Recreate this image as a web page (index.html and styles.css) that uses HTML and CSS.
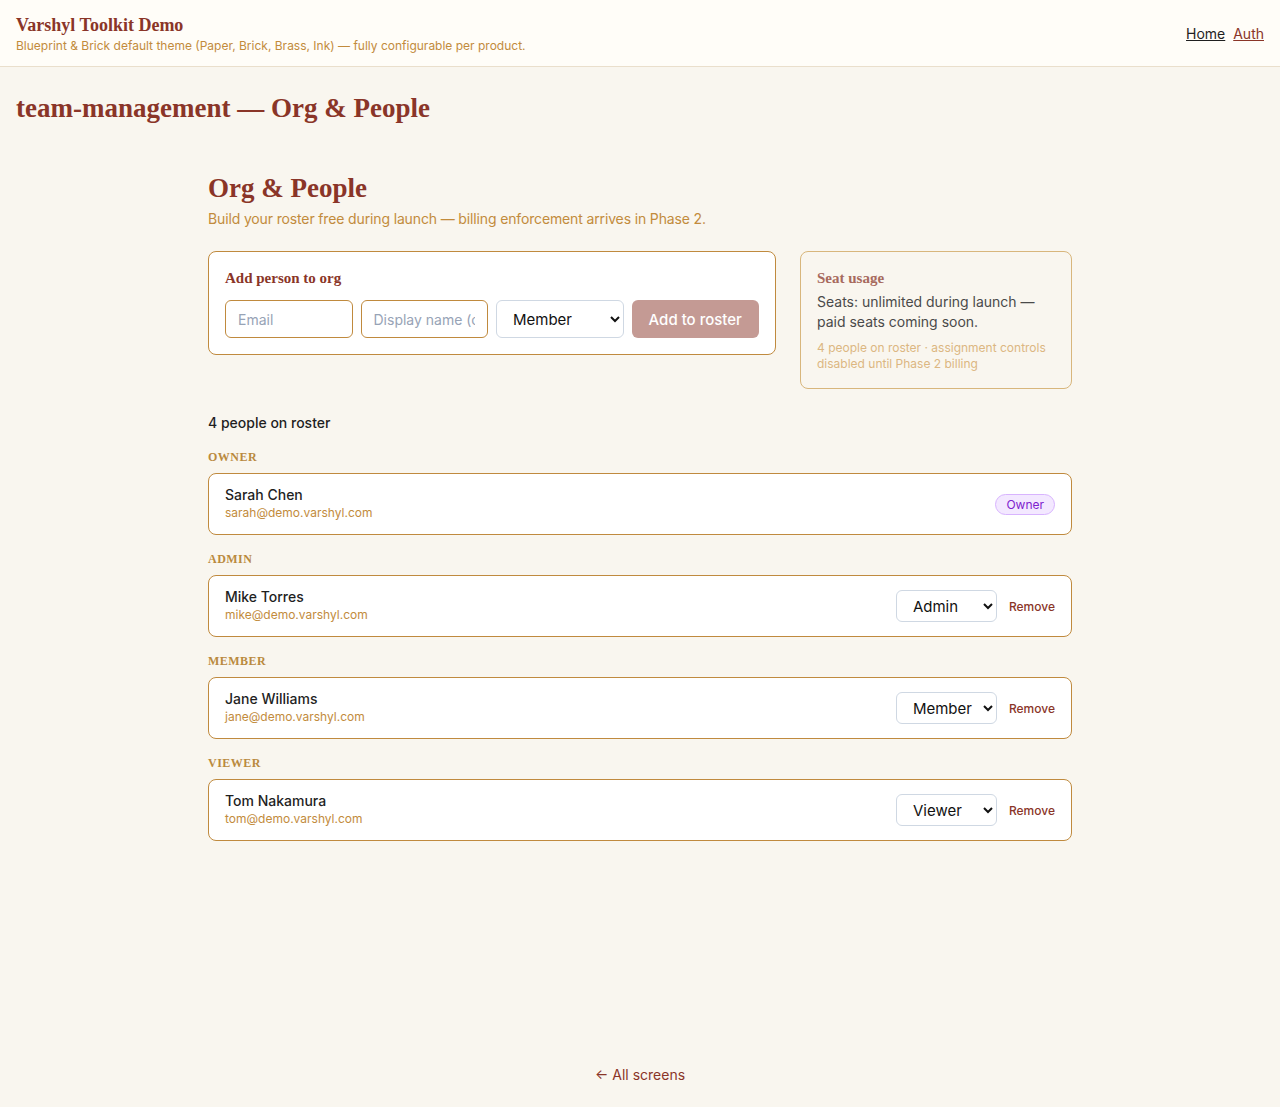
FILE: index.html
```html
<!DOCTYPE html>
<html lang="en">
<head>
  <meta charset="UTF-8" />
  <meta name="viewport" content="width=device-width, initial-scale=1.0"/>
  <title>team-management — Org &amp; People</title>
  <link rel="stylesheet" href="styles.css">
</head>
<body>
  <header class="top-bar">
    <div class="brand">
      <div class="brand-name">Varshyl Toolkit Demo</div>
      <div class="brand-tagline">Blueprint &amp; Brick default theme (Paper, Brick, Brass, Ink) — fully configurable per product.</div>
    </div>
    <nav class="nav-links">
      <a href="#" class="nav-home">Home</a>
      <a href="#" class="nav-auth">Auth</a>
    </nav>
  </header>

  <h1 class="screen-title">team-management — Org &amp; People</h1>

  <main class="screen">
    <h2 class="page-title">Org &amp; People</h2>
    <p class="page-lead">Build your roster free during launch — billing enforcement arrives in Phase 2.</p>

    <div class="top-grid">
      <section class="card add-card">
        <h3 class="card-title">Add person to org</h3>
        <div class="add-row">
          <input class="field" type="email" placeholder="Email">
          <input class="field" type="text" placeholder="Display name (optional)">
          <select class="select">
            <option>Member</option>
            <option>Admin</option>
            <option>Viewer</option>
          </select>
          <button class="add-button" disabled>Add to roster</button>
        </div>
      </section>

      <aside class="seat-card">
        <h3 class="card-title">Seat usage</h3>
        <p class="seat-text">Seats: unlimited during launch — paid seats coming soon.</p>
        <p class="seat-note">4 people on roster · assignment controls disabled until Phase 2 billing</p>
      </aside>
    </div>

    <p class="roster-count">4 people on roster</p>

    <div class="group">
      <div class="group-label">Owner</div>
      <div class="person">
        <div class="person-info">
          <div class="person-name">Sarah Chen</div>
          <div class="person-email">sarah@demo.varshyl.com</div>
        </div>
        <span class="owner-badge">Owner</span>
      </div>
    </div>

    <div class="group">
      <div class="group-label">Admin</div>
      <div class="person">
        <div class="person-info">
          <div class="person-name">Mike Torres</div>
          <div class="person-email">mike@demo.varshyl.com</div>
        </div>
        <div class="person-actions">
          <select class="select role-select">
            <option selected>Admin</option>
            <option>Member</option>
            <option>Viewer</option>
          </select>
          <button class="remove">Remove</button>
        </div>
      </div>
    </div>

    <div class="group">
      <div class="group-label">Member</div>
      <div class="person">
        <div class="person-info">
          <div class="person-name">Jane Williams</div>
          <div class="person-email">jane@demo.varshyl.com</div>
        </div>
        <div class="person-actions">
          <select class="select role-select">
            <option>Admin</option>
            <option selected>Member</option>
            <option>Viewer</option>
          </select>
          <button class="remove">Remove</button>
        </div>
      </div>
    </div>

    <div class="group">
      <div class="group-label">Viewer</div>
      <div class="person">
        <div class="person-info">
          <div class="person-name">Tom Nakamura</div>
          <div class="person-email">tom@demo.varshyl.com</div>
        </div>
        <div class="person-actions">
          <select class="select role-select">
            <option>Admin</option>
            <option>Member</option>
            <option selected>Viewer</option>
          </select>
          <button class="remove">Remove</button>
        </div>
      </div>
    </div>
  </main>

  <footer class="footer">
    <a href="#">← All screens</a>
  </footer>
</body>
</html>
```

FILE: styles.css
```css
body {
  font-family: Inter, 'Noto Sans', sans-serif;
  background-color: #f9f6ef;
  color: #1f1f1f;
  margin: 0;
  min-height: 1107px;
  display: flex;
  flex-direction: column;
}

.top-bar {
  display: flex;
  justify-content: space-between;
  align-items: center;
  background-color: #fffdf8;
  border-bottom: 1px solid #eadfcc;
  padding: 13px 16px 13px 16px;
  height: 40px;
}

.brand-name {
  font-family: 'Liberation Serif', serif;
  font-weight: bold;
  font-size: 18px;
  color: #8a3528;
  line-height: 22px;
}

.brand-tagline {
  font-size: 12px;
  color: #c28b3c;
  margin-top: 2px;
}

.nav-links {
  font-size: 14px;
}

.nav-links a {
  margin-left: 4px;
}

.nav-home {
  color: #1f1f1f;
}

.nav-auth {
  color: #8a3528;
}

.screen-title {
  font-family: 'Liberation Serif', serif;
  font-size: 27px;
  color: #8a3528;
  margin: 24px 16px 0;
  line-height: 34px;
}

.screen {
  width: 864px;
  margin: 0 auto;
  padding-top: 46px;
  flex: 1;
}

.page-title {
  font-family: 'Liberation Serif', serif;
  font-size: 27px;
  color: #8a3528;
  margin: 0;
  line-height: 34px;
}

.page-lead {
  font-size: 14px;
  letter-spacing: -0.01em;
  color: #c28b3c;
  margin: 5px 0 24px;
}

.top-grid {
  display: grid;
  grid-template-columns: 1fr 272px;
  gap: 24px;
  align-items: start;
}

.card {
  background-color: #fff;
  border: 1px solid #c08a3e;
  border-radius: 8px;
  padding: 16px;
}

.card-title {
  font-family: 'Liberation Serif', serif;
  font-size: 15px;
  color: #8a3528;
  margin: 0 0 12px;
  line-height: 20px;
}

.add-row {
  display: grid;
  grid-template-columns: repeat(4, 1fr);
  gap: 8px;
}

.field {
  font-family: inherit;
  font-size: 14px;
  height: 38px;
  box-sizing: border-box;
  border: 1px solid #c08a3e;
  border-radius: 6px;
  padding: 0 12px;
  min-width: 0;
  color: #1f1f1f;
}

.field::placeholder {
  color: #97a3b6;
}

.select {
  font-family: inherit;
  font-size: 15px;
  height: 38px;
  box-sizing: border-box;
  border: 1px solid #cfd8e3;
  border-radius: 6px;
  padding: 0 4px 0 12px;
  background-color: #fff;
  color: #111;
  min-width: 0;
}

.add-button {
  font-family: inherit;
  font-size: 15px;
  font-weight: 500;
  height: 38px;
  border: none;
  border-radius: 6px;
  background-color: #c49a94;
  color: #fff;
}

.seat-card {
  border: 1px solid #d8b67c;
  border-radius: 8px;
  padding: 16px;
}

.seat-card .card-title {
  color: #a76a5e;
  margin-bottom: 4px;
}

.seat-text {
  font-size: 14px;
  color: #4a4a4a;
  line-height: 20px;
  margin: 0 0 8px;
}

.seat-note {
  font-size: 12px;
  color: #dcb782;
  line-height: 16px;
  margin: 0;
}

.roster-count {
  font-size: 14px;
  font-weight: 500;
  color: #1f1f1f;
  margin: 25px 0 18px;
}

.group {
  margin-bottom: 16px;
}

.group-label {
  font-family: 'Liberation Serif', serif;
  font-weight: bold;
  font-size: 12px;
  letter-spacing: 0.04em;
  text-transform: uppercase;
  color: #b98a3e;
  margin-bottom: 8px;
  line-height: 16px;
}

.person {
  display: flex;
  justify-content: space-between;
  align-items: center;
  background-color: #fff;
  border: 1px solid #c08a3e;
  border-radius: 8px;
  padding: 0 16px;
  height: 60px;
}

.person-name {
  font-size: 14px;
  font-weight: 500;
  color: #1f1f1f;
  line-height: 18px;
}

.person-email {
  font-size: 12px;
  color: #c28b3c;
  line-height: 18px;
}

.owner-badge {
  font-size: 12px;
  color: #7e22ce;
  background-color: #f3e8ff;
  border: 1px solid #d8b4fe;
  border-radius: 999px;
  padding: 2px 10px;
}

.person-actions {
  display: flex;
  align-items: center;
  gap: 12px;
}

.role-select {
  width: 101px;
  height: 32px;
  padding: 0 4px 0 12px;
}

.remove {
  font-family: inherit;
  font-size: 12px;
  font-weight: 500;
  background: none;
  border: none;
  padding: 0;
  color: #8a3528;
  cursor: pointer;
}

.footer {
  text-align: center;
  padding: 24px 0 24px;
  font-size: 14px;
}

.footer a {
  color: #8a3528;
  text-decoration: none;
}
```
